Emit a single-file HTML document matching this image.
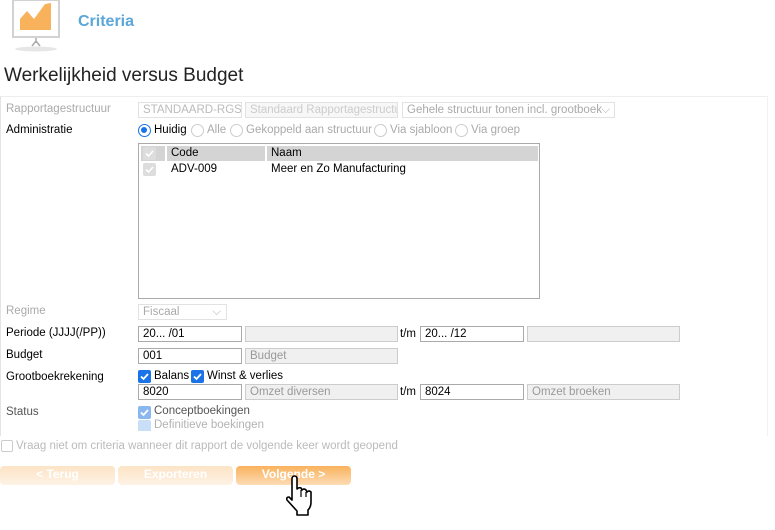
<!DOCTYPE html>
<html><head><meta charset="utf-8"><style>
*{box-sizing:border-box;margin:0;padding:0}
body{width:775px;height:530px;background:#fff;font-family:"Liberation Sans",Arial,sans-serif;font-size:11.5px;color:#000;position:relative;overflow:hidden}
.a{position:absolute;white-space:nowrap}
.in{position:absolute;height:16px;border:1px solid #aaa;background:#fff;padding:1px 4px;font-size:11.5px;line-height:12px;white-space:nowrap;overflow:hidden}
.ro{border-color:#ccc;background:#f0f0f0;color:#999}
.dis{border-color:#e2e2e2;background:#fff;color:#bbb}
.lbl{position:absolute;left:6px;font-size:11.5px;white-space:nowrap}
.g{color:#aaa}
.rad{position:absolute;width:13px;height:13px;border-radius:50%;border:1px solid #ccc;background:#fff}
.cb{position:absolute;width:13px;height:13px;border-radius:2px;background:#1a73e8}
.cb svg{position:absolute;left:1px;top:1px}
.btn{position:absolute;top:466px;height:19px;border-radius:4px;color:#fff;font-weight:bold;font-size:12px;text-align:center;line-height:17px;background:linear-gradient(#f9b25c,#fddcb5)}
</style></head><body>
<svg class="a" style="left:10px;top:0" width="52" height="54" viewBox="0 0 52 54">
<ellipse cx="26" cy="49" rx="21" ry="2.5" fill="#e6e6e6"/>
<rect x="3" y="0" width="46" height="37" fill="#fff" stroke="#d2d2d2" stroke-width="2"/>
<path d="M10 30 L10 19 L17 11 L24 19 L35 4 L41 3 L41 30Z" fill="#f9b25c"/>
<path d="M26 38 L26 43 M26 41 L22 46 M26 41 L30 46" stroke="#aaa" stroke-width="1.5"/>
</svg>
<div class="a" style="left:78px;top:13px;font-size:16px;font-weight:bold;color:#5aa7d8">Criteria</div>
<div class="a" style="left:4px;top:65px;font-size:19px;color:#222">Werkelijkheid versus Budget</div>
<div class="a" style="left:0;top:96px;width:768px;height:1px;background:#eee"></div>
<div class="a" style="left:0;top:96px;width:1px;height:340px;background:#e4e4e4"></div>
<div class="a" style="left:767px;top:96px;width:1px;height:340px;background:#f2f2f2"></div>

<div class="lbl g" style="top:103px">Rapportagestructuur</div>
<div class="in dis" style="left:138px;top:102px;width:104px">STANDAARD-RGS</div>
<div class="in dis" style="left:245px;top:102px;width:153px;background:#f7f7f7;color:#ccc">Standaard Rapportagestructu</div>
<div class="in dis" style="left:402px;top:102px;width:213px;color:#aaa">Gehele structuur tonen incl. grootboek <span style="position:absolute;right:4px;color:#bbb">&#x2335;</span></div>

<div class="lbl" style="top:124px">Administratie</div>
<div class="rad" style="left:138px;top:124px;border:1.5px solid #1a73e8"><div style="position:absolute;left:2px;top:2px;width:6px;height:6px;border-radius:50%;background:#1a73e8"></div></div>
<div class="a" style="left:154px;top:124px">Huidig</div>
<div class="rad" style="left:191px;top:124px"></div><div class="a g" style="left:207px;top:124px">Alle</div>
<div class="rad" style="left:230px;top:124px"></div><div class="a g" style="left:246px;top:124px">Gekoppeld aan structuur</div>
<div class="rad" style="left:374px;top:124px"></div><div class="a g" style="left:390px;top:124px">Via sjabloon</div>
<div class="rad" style="left:455px;top:124px"></div><div class="a g" style="left:471px;top:124px">Via groep</div>

<div class="a" style="left:138px;top:143px;width:402px;height:156px;border:1px solid #aaa"></div>
<div class="a" style="left:141px;top:146px;width:24px;height:15px;background:#d4d4d4"></div>
<div class="a" style="left:167px;top:146px;width:98px;height:15px;background:#d4d4d4"></div>
<div class="a" style="left:267px;top:146px;width:271px;height:15px;background:#d4d4d4"></div>
<div class="a" style="left:143px;top:147px;width:13px;height:13px;background:#ddd;border-radius:2px"><svg width="13" height="13"><path d="M3 6.5l2.5 2.5 4.5-5" stroke="#fff" stroke-width="1.6" fill="none"/></svg></div>
<div class="a" style="left:171px;top:147px">Code</div>
<div class="a" style="left:271px;top:147px">Naam</div>
<div class="a" style="left:143px;top:163px;width:13px;height:13px;background:#ddd;border-radius:2px"><svg width="13" height="13"><path d="M3 6.5l2.5 2.5 4.5-5" stroke="#fff" stroke-width="1.6" fill="none"/></svg></div>
<div class="a" style="left:171px;top:163px">ADV-009</div>
<div class="a" style="left:271px;top:163px">Meer en Zo Manufacturing</div>

<div class="lbl g" style="top:305px">Regime</div>
<div class="in dis" style="left:138px;top:304px;width:89px;color:#aaa">Fiscaal<span style="position:absolute;right:5px;color:#bbb">&#x2335;</span></div>

<div class="lbl" style="top:327px">Periode (JJJJ(/PP))</div>
<div class="in" style="left:138px;top:326px;width:104px">20... /01</div>
<div class="in ro" style="left:245px;top:326px;width:153px"></div>
<div class="a" style="left:400px;top:328px">t/m</div>
<div class="in" style="left:420px;top:326px;width:104px">20... /12</div>
<div class="in ro" style="left:527px;top:326px;width:153px"></div>

<div class="lbl" style="top:349px">Budget</div>
<div class="in" style="left:138px;top:348px;width:104px">001</div>
<div class="in ro" style="left:245px;top:348px;width:153px">Budget</div>

<div class="lbl" style="top:371px">Grootboekrekening</div>
<div class="cb" style="left:138px;top:370px"><svg width="11" height="11"><path d="M2 5.5l2.5 2.5 4.5-5" stroke="#fff" stroke-width="1.8" fill="none"/></svg></div>
<div class="a" style="left:154px;top:370px">Balans</div>
<div class="cb" style="left:191px;top:370px"><svg width="11" height="11"><path d="M2 5.5l2.5 2.5 4.5-5" stroke="#fff" stroke-width="1.8" fill="none"/></svg></div>
<div class="a" style="left:207px;top:370px">Winst &amp; verlies</div>
<div class="in" style="left:138px;top:384px;width:104px">8020</div>
<div class="in ro" style="left:245px;top:384px;width:153px">Omzet diversen</div>
<div class="a" style="left:400px;top:386px">t/m</div>
<div class="in" style="left:420px;top:384px;width:104px">8024</div>
<div class="in ro" style="left:527px;top:384px;width:153px">Omzet broeken</div>

<div class="lbl" style="top:406px;color:#555">Status</div>
<div class="cb" style="left:138px;top:406px;background:#8ab7ef"><svg width="11" height="11"><path d="M2 5.5l2.5 2.5 4.5-5" stroke="#fff" stroke-width="1.8" fill="none"/></svg></div>
<div class="a" style="left:154px;top:405px;color:#555">Conceptboekingen</div>
<div class="a" style="left:138px;top:419px;width:200px;height:12px;overflow:hidden;opacity:.45">
<div class="cb" style="left:0;top:1px;background:#8ab7ef"></div><div class="a" style="left:16px;top:0;color:#555">Definitieve boekingen</div></div>

<div class="a" style="left:1px;top:440px;width:12px;height:12px;border:1px solid #ccc;border-radius:2px"></div>
<div class="a g" style="left:16px;top:440px;color:#bbb">Vraag niet om criteria wanneer dit rapport de volgende keer wordt geopend</div>

<div class="btn" style="left:0;width:115px;opacity:.35">&lt; Terug</div>
<div class="btn" style="left:118px;width:115px;opacity:.35">Exporteren</div>
<div class="btn" style="left:236px;width:115px">Volgende &gt;</div>

<svg class="a" style="left:282px;top:475px" width="40" height="45" viewBox="0 0 40 45">
<path d="M10 4 Q10 1 12.5 1 Q15 1 15 4 L15 14 Q17 12 19 13 L20 15 Q22 13 24 15 L25 17 Q27 15 29 17 L29 27 Q29 32 26 35 L26 40 L15 40 L15 36 L5 25 Q4 22 7 22 L10 25Z" fill="#fff" stroke="#000" stroke-width="1.6" stroke-linejoin="round"/>
<path d="M19 15 L19 22 M24 17 L24 22" stroke="#000" stroke-width="1.2"/>
</svg>
</body></html>
